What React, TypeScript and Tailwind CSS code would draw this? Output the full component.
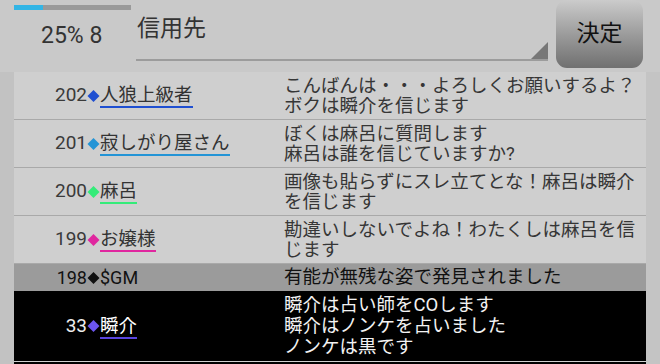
import React from "react";

type Post = {
  no: number;
  name: string;
  color: string;
  lines: string[];
};

const posts: Post[] = [
  { no: 202, name: "人狼上級者", color: "#1f4fd1", lines: ["こんばんは・・・よろしくお願いするよ？", "ボクは瞬介を信じます"] },
  { no: 201, name: "寂しがり屋さん", color: "#2394d6", lines: ["ぼくは麻呂に質問します", "麻呂は誰を信じていますか?"] },
  { no: 200, name: "麻呂", color: "#34ec79", lines: ["画像も貼らずにスレ立てとな！麻呂は瞬介", "を信じます"] },
  { no: 199, name: "お嬢様", color: "#e0279f", lines: ["勘違いしないでよね！わたくしは麻呂を信", "じます"] },
];

const font = { fontFamily: 'Roboto, "Noto Sans CJK JP", sans-serif' };

const Diamond = ({ color }: { color: string }) => (
  <svg width="13" height="14" viewBox="0 0 13 14" className="shrink-0">
    <polygon points="6.5,1 12.5,7 6.5,13 0.5,7" fill={color} />
  </svg>
);

const App = () => {
  return (
    <div className="w-[660px] h-[364px] overflow-hidden bg-[#c6c6c6] text-[#333]" style={font}>
      {/* header */}
      <div className="flex h-[72px] bg-[#c9c9c9]">
        <div className="w-[131px] pl-[14px] shrink-0">
          <div className="mt-[5px] h-[5px] w-[117px] bg-[#9a9a9a]">
            <div className="h-full w-[29px] bg-[#33b5e5]" />
          </div>
          <div className="mt-[11px] pl-[27px] text-[23px] leading-[30px] text-[#333]">25% 8</div>
        </div>

        <div className="relative ml-[5px] w-[412px] h-[61px] border-b-2 border-[#9c9c9c]">
          <div className="pt-[14px] pl-[1px] text-[23px] leading-[30px] text-[#333]">信用先</div>
          <div className="absolute right-0 bottom-0 w-0 h-0 border-l-[17px] border-l-transparent border-b-[17px] border-b-[#777]" />
        </div>

        <div className="ml-[8px] w-[87px] h-[68px] rounded-[11px] bg-gradient-to-b from-[#cbcbcb] to-[#707070] flex items-center justify-center">
          <span className="text-[23px] text-[#111]">決定</span>
        </div>
      </div>

      {/* list */}
      <div className="flex h-[292px]">
        <div className="w-[14px] bg-[#c2c2c2]" />
        <div className="w-[632px] bg-[#cfcfcf]">
          {posts.map((p) => (
            <div key={p.no} className="flex h-[48px] border-b border-[#a9a9a9]">
              <div className="w-[270px] flex items-center">
                <span className="w-[73px] text-right text-[19px] text-[#3a3a3a]">{p.no}</span>
                <Diamond color={p.color} />
                <span
                  className="text-[18.5px] leading-[22px] text-[#333] border-b-2 mt-[1px]"
                  style={{ borderColor: p.color }}
                >
                  {p.name}
                </span>
              </div>
              <div className="flex-1 flex flex-col justify-center text-[18.5px] leading-[20px] text-[#363636]">
                {p.lines.map((l) => (
                  <div key={l}>{l}</div>
                ))}
              </div>
            </div>
          ))}

          <div className="flex h-[27px] bg-[#9b9b9b] items-center text-[#111]">
            <div className="w-[270px] flex items-center">
              <span className="w-[73px] text-right text-[18px]">198</span>
              <Diamond color="#111" />
              <span className="text-[18px]">$GM</span>
            </div>
            <div className="flex-1 text-[18.5px]">有能が無残な姿で発見されました</div>
          </div>

          <div className="flex h-[71px] bg-black text-white border-b border-[#cfcfcf]">
            <div className="w-[270px] flex items-center">
              <span className="w-[73px] text-right text-[19px] text-[#eee]">33</span>
              <Diamond color="#6b55ee" />
              <span className="text-[18.5px] leading-[22px] border-b-2 border-[#5a45de] mt-[1px]">瞬介</span>
            </div>
            <div className="flex-1 flex flex-col justify-center text-[18.5px] leading-[21px] text-[#f2f2f2]">
              <div>瞬介は占い師をCOします</div>
              <div>瞬介はノンケを占いました</div>
              <div>ノンケは黒です</div>
            </div>
          </div>
          <div className="h-[40px] bg-black" />
        </div>
        <div className="w-[14px] bg-[#c4c4c4]" />
      </div>
    </div>
  );
};

export default App;
